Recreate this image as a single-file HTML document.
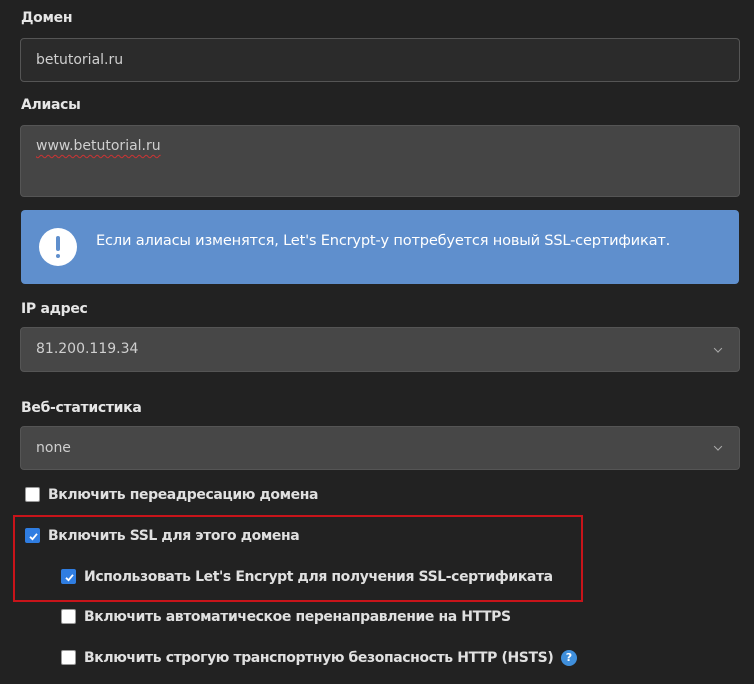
<!DOCTYPE html>
<html><head><meta charset="utf-8"><style>
*{box-sizing:border-box;margin:0;padding:0}
body{width:754px;height:684px;background:#222;font-family:"DejaVu Sans","Liberation Sans",sans-serif;color:#ddd;position:relative;overflow:hidden}
.abs{position:absolute}
.lbl{font-weight:bold;font-size:14px;color:#e6e6e6;left:21px;letter-spacing:-0.3px}
.inp{left:20px;width:720px;border:1px solid #555;border-radius:4px;font-size:14px;color:#cfcfcf;padding-left:15px}
.chev{position:absolute;right:18px;top:50%;width:6px;height:6px;border-right:1.5px solid #aaa;border-bottom:1.5px solid #aaa;transform:translateY(-75%) rotate(45deg)}
.cb{width:15px;height:15px;border-radius:2px;background:#fff;border:1px solid #999}
.cb.on{background:#2f7de1;border-color:#2f7de1}
.cb svg{position:absolute;left:1px;top:1px}
.ct{font-size:14px;font-weight:bold;color:#e0e0e0;letter-spacing:-0.4px}
</style></head><body>
<div class="abs lbl" style="top:10px">Домен</div>
<div class="abs inp" style="top:38px;height:44px;background:#2b2b2b;line-height:42px">betutorial.ru</div>
<div class="abs lbl" style="top:97px">Алиасы</div>
<div class="abs inp" style="top:125px;height:72px;background:#454545;padding-top:12px"><span style="text-decoration:underline wavy #c33;text-underline-offset:4px;text-decoration-thickness:1px">www.betutorial.ru</span></div>
<div class="abs" style="left:21px;top:210px;width:718px;height:74px;background:#5f8fcd;border-radius:4px">
<div class="abs" style="left:18px;top:18px;width:38px;height:38px;border-radius:50%;background:#fff"><div class="abs" style="left:17px;top:8px;width:4px;height:15px;background:#5f8fcd;border-radius:2px"></div><div class="abs" style="left:17px;top:26px;width:4px;height:4px;background:#5f8fcd;border-radius:50%"></div></div>
<div class="abs" style="left:75px;top:22px;font-size:14.6px;color:#fff;letter-spacing:-0.2px">Если алиасы изменятся, Let's Encrypt-у потребуется новый SSL-сертификат.</div>
</div>
<div class="abs lbl" style="top:301px">IP адрес</div>
<div class="abs inp" style="top:327px;height:45px;background:#474747;line-height:43px">81.200.119.34<span class="chev"></span></div>
<div class="abs lbl" style="top:400px">Веб-статистика</div>
<div class="abs inp" style="top:426px;height:44px;background:#474747;line-height:42px">none<span class="chev"></span></div>
<div class="abs cb" style="left:25px;top:487px"></div><div class="abs ct" style="left:48px;top:487px">Включить переадресацию домена</div>
<div class="abs" style="left:13px;top:515px;width:570px;height:87px;border:2px solid #c8141a"></div>
<div class="abs cb on" style="left:25px;top:528px"><svg width="13" height="13" viewBox="0 0 13 13"><path d="M3 6.8 L5.5 9.2 L10 3.8" fill="none" stroke="#fff" stroke-width="1.8"/></svg></div><div class="abs ct" style="left:48px;top:528px">Включить SSL для этого домена</div>
<div class="abs cb on" style="left:61px;top:569px"><svg width="13" height="13" viewBox="0 0 13 13"><path d="M3 6.8 L5.5 9.2 L10 3.8" fill="none" stroke="#fff" stroke-width="1.8"/></svg></div><div class="abs ct" style="left:84px;top:569px">Использовать Let's Encrypt для получения SSL-сертификата</div>
<div class="abs cb" style="left:61px;top:609px"></div><div class="abs ct" style="left:84px;top:609px">Включить автоматическое перенаправление на HTTPS</div>
<div class="abs cb" style="left:61px;top:650px"></div><div class="abs ct" style="left:84px;top:650px">Включить строгую транспортную безопасность HTTP (HSTS)</div>
<div class="abs" style="left:561px;top:650px;width:16px;height:16px;border-radius:50%;background:#3f8fdc;color:#fff;font-size:11px;font-weight:bold;text-align:center;line-height:16px">?</div>
</body></html>
